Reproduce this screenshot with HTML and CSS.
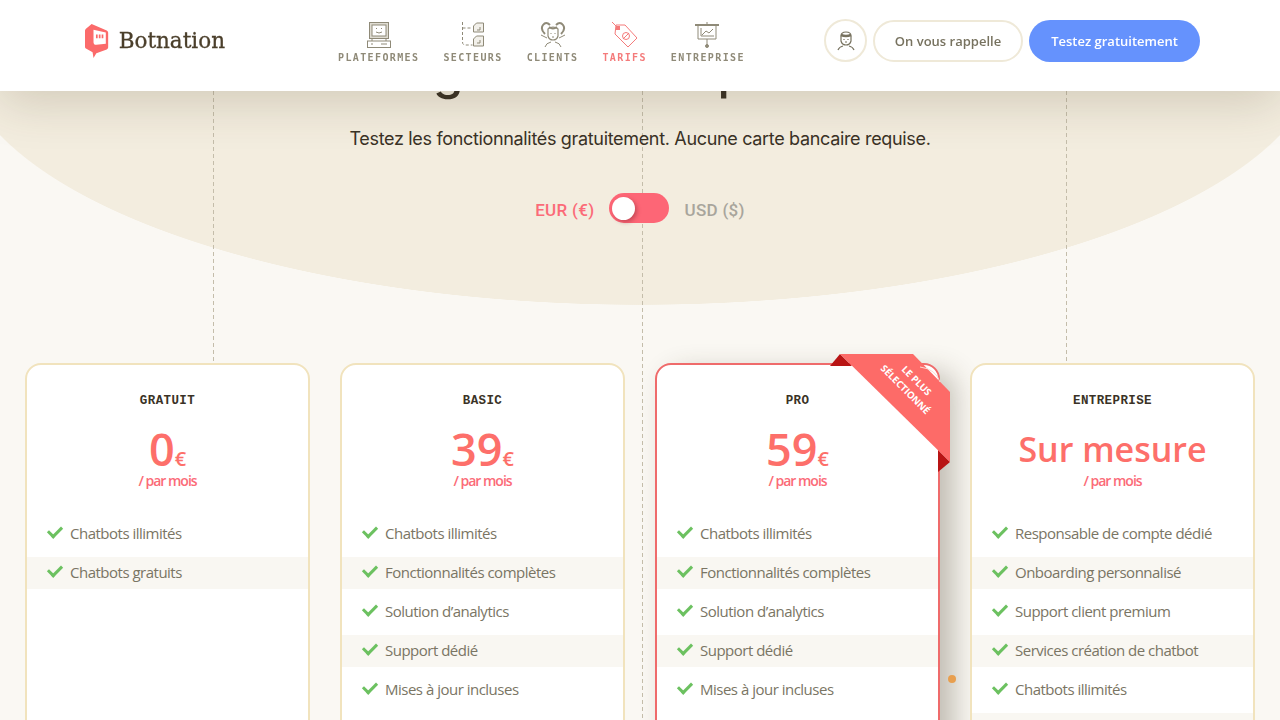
FILE: index.html
```html
<!DOCTYPE html>
<html lang="fr">
<head>
    <meta charset="UTF-8">
    <title>Botnation - Tarifs</title>
    <link rel="stylesheet" href="styles.css">
</head>
<body>
    <header class="top_bar">
        <a class="logo">
            <svg width="25" height="36" viewBox="0 0 25 36">
                <path d="M7 0 L23 7 Q24.500 8 24.500 9 V25 Q24.500 26 23 27 L12 31 L9 36 L8 30 L1 26 Q0 25.500 0 24 V7 Q0 6 1 5 Z" fill="#fb6a6a"/>
                <path d="M9 6 L22 9 V21 L12 22 Q9 22 9 19 Z" fill="#fff"/>
                <path d="M12.500 11 v4 M15.500 11 v4 M18.500 11 v4" stroke="#fb6a6a" stroke-width="1.800"/>
            </svg>
            <span>Botnation</span>
        </a>

        <nav class="menu">
            <a class="menu_item">
                <svg width="24" height="26" viewBox="0 0 24 26" fill="none" stroke="#8f8a78" stroke-width="1">
                    <rect x="2.500" y="0.500" width="19" height="16" fill="#dfdcd2"/>
                    <rect x="5" y="3" width="14" height="11" fill="#fff"/>
                    <path d="M9.500 6v1 M14.500 6v1 M9 10q3 2 6 0"/>
                    <rect x="0.500" y="19" width="23" height="6.500"/>
                    <path d="M5 17v2 M19 17v2 M4 22h2 M14 22h6"/>
                </svg>
                <span>PLATEFORMES</span>
            </a>
            <a class="menu_item">
                <svg width="24" height="26" viewBox="0 0 24 26" fill="none" stroke="#8f8a78" stroke-width="1">
                    <path d="M1.500 0v20q0 3 3 3h7 M1.500 6h9" stroke-dasharray="3 2"/>
                    <path d="M12.500 4l3-3h7v9h-10z" fill="#f2f0ea"/>
                    <path d="M12.500 17l3-3h7v10h-10z" fill="#f2f0ea"/>
                    <path d="M16 8h3v-3 M16 21h3v-3"/>
                </svg>
                <span>SECTEURS</span>
            </a>
            <a class="menu_item">
                <svg width="26" height="26" viewBox="0 0 26 26" fill="none" stroke="#8f8a78" stroke-width="1">
                    <path d="M5 12Q0 7 3 3T10 3 M21 12Q26 7 23 3T16 3" stroke-width="2"/>
                    <path d="M8 7q5-4 10 0v7q-1 4-5 4t-5-4z" fill="#fff" stroke-width="1.200"/>
                    <path d="M9 5q4 3 8 0" stroke-width="2"/>
                    <path d="M11 11v1 M15 11v1 M12 15h2 M1 13l6 3 M25 13l-6 3 M5 25q1-4 6-5 M21 25q-1-4-6-5"/>
                </svg>
                <span>CLIENTS</span>
            </a>
            <a class="menu_item menu_active">
                <svg width="25" height="26" viewBox="0 0 25 26" fill="none" stroke="#f47b7b" stroke-width="1">
                    <path d="M4 3h9l12 13-9 9L3 12z"/>
                    <path d="M0 0l7 7"/>
                    <rect x="4.500" y="4.500" width="3" height="3" fill="#f47b7b"/>
                    <circle cx="14" cy="14" r="3.500"/>
                    <path d="M11 17l6-6"/>
                </svg>
                <span>TARIFS</span>
            </a>
            <a class="menu_item">
                <svg width="25" height="26" viewBox="0 0 25 26" fill="none" stroke="#8f8a78" stroke-width="1">
                    <path d="M0 3h24" stroke-width="2"/>
                    <path d="M3 4v13h18V4 M12 0v3 M12 17v6"/>
                    <circle cx="12" cy="24" r="1.500" fill="#8f8a78"/>
                    <path d="M6 6v8h13 M7 13l4-4 3 2 4-4"/>
                </svg>
                <span>ENTREPRISE</span>
            </a>
        </nav>

        <div class="actions">
            <a class="round_btn">
                <svg width="18" height="20" viewBox="0 0 18 20" fill="none" stroke="#77725f" stroke-width="1.200">
                    <path d="M4 5q0-4 5-4t5 4v5q-1 4-5 4t-5-4z"/>
                    <path d="M4 4q5 2 10 0" stroke-width="2.500"/>
                    <path d="M7 8v1 M11 8v1 M8 11h2 M1 19q1-3 5-4 M17 19q-1-3-5-4"/>
                </svg>
            </a>
            <a class="btn btn_outline">On vous rappelle</a>
            <a class="btn btn_blue">Testez gratuitement</a>
        </div>
    </header>

    <main class="page">
        <section class="hero">
            <h1>Un large choix de plans tarifés</h1>
            <p class="hero_sub">Testez les fonctionnalités gratuitement. Aucune carte bancaire requise.</p>
            <div class="currency">
                <span class="cur_on">EUR (€)</span>
                <span class="switch"><span class="knob"></span></span>
                <span class="cur_off">USD ($)</span>
            </div>
        </section>

        <section class="plans">
            <div class="plan">
                <h2>GRATUIT</h2>
                <div class="price">0<small>€</small></div>
                <div class="period">/ par mois</div>
                <ul>
                    <li>Chatbots illimités</li>
                    <li>Chatbots gratuits</li>
                </ul>
            </div>

            <div class="plan">
                <h2>BASIC</h2>
                <div class="price">39<small>€</small></div>
                <div class="period">/ par mois</div>
                <ul>
                    <li>Chatbots illimités</li>
                    <li>Fonctionnalités complètes</li>
                    <li>Solution d’analytics</li>
                    <li>Support dédié</li>
                    <li>Mises à jour incluses</li>
                </ul>
            </div>

            <div class="plan plan_pro">
                <svg class="ribbon" width="122" height="120" viewBox="0 0 122 120">
                    <path d="M2 14 L12 2 L24 14 Z" fill="#b81414"/>
                    <path d="M110 98 L122 110 L110 120 Z" fill="#b81414"/>
                    <path d="M12 2 H85 L122 40 V110 Z" fill="#fd6b68"/>
                    <path d="M92 15 Q108 17 112 30" fill="none" stroke="#fbd9d4" stroke-width="1"/>
                    <text class="ribbon_text" transform="translate(73 18) rotate(45)">LE PLUS</text>
                    <text class="ribbon_text" transform="translate(52 17) rotate(45)">SÉLECTIONNÉ</text>
                </svg>
                <h2>PRO</h2>
                <div class="price">59<small>€</small></div>
                <div class="period">/ par mois</div>
                <ul>
                    <li>Chatbots illimités</li>
                    <li>Fonctionnalités complètes</li>
                    <li>Solution d’analytics</li>
                    <li>Support dédié</li>
                    <li>Mises à jour incluses</li>
                </ul>
                <span class="dot"></span>
            </div>

            <div class="plan">
                <h2>ENTREPRISE</h2>
                <div class="price price_text">Sur mesure</div>
                <div class="period">/ par mois</div>
                <ul>
                    <li>Responsable de compte dédié</li>
                    <li>Onboarding personnalisé</li>
                    <li>Support client premium</li>
                    <li>Services création de chatbot</li>
                    <li>Chatbots illimités</li>
                    <li>&nbsp;</li>
                </ul>
            </div>
        </section>
    </main>
</body>
</html>
```

FILE: styles.css
```css
/*tag*/
html, body{
    margin: 0;
    height: 720px;
    overflow: hidden;
}
body{
    font-family: "Open Sans", sans-serif;
    background: #faf8f3;
}
h1, h2, p, ul{
    margin: 0;
    padding: 0;
}
ul{
    list-style: none;
}

/*header*/
.top_bar{
    position: fixed;
    top: 0;
    left: 0;
    right: 0;
    z-index: 5;
    height: 91px;
    box-sizing: border-box;
    padding: 0 80px 10px 85px;
    display: flex;
    align-items: center;
    background: #fff;
    box-shadow: 0 10px 50px rgba(70, 55, 25, 0.2);
}
.logo{
    display: flex;
    align-items: center;
    gap: 10px;
    width: 140px;
}
.logo span{
    font-family: "DejaVu Serif", serif;
    font-size: 21.500px;
    color: #4b3f2b;
    -webkit-text-stroke: 0.3px #4b3f2b;
}
.menu{
    display: flex;
    gap: 24px;
    margin-left: 113px;
}
.menu_item{
    display: flex;
    flex-direction: column;
    align-items: center;
    gap: 3px;
    font-family: "DejaVu Sans Mono", monospace;
    font-size: 10px;
    font-weight: 700;
    line-height: 14px;
    letter-spacing: 1.38px;
    color: #8f8a78;
    margin-top: 5px;
}
.menu_active{
    color: #f47b7b;
}
.actions{
    margin-left: auto;
    display: flex;
    align-items: center;
    gap: 6px;
}
.round_btn{
    width: 43px;
    height: 43px;
    box-sizing: border-box;
    border: 2px solid #efe9d8;
    border-radius: 50%;
    display: flex;
    align-items: center;
    justify-content: center;
}
.btn{
    height: 42px;
    box-sizing: border-box;
    border-radius: 21px;
    display: flex;
    align-items: center;
    justify-content: center;
    font-size: 13px;
    font-weight: 600;
}
.btn_outline{
    width: 150px;
    border: 2px solid #efe9d8;
    color: #77725f;
}
.btn_blue{
    width: 171px;
    background: #6592fd;
    color: #fff;
}

/*page background, dashes and ellipse*/
.page{
    height: 720px;
    background:
        repeating-linear-gradient(to bottom, #c4bdaa 0 4px, transparent 4px 7px) 213px 0 / 1px 362px no-repeat,
        repeating-linear-gradient(to bottom, #c4bdaa 0 4px, transparent 4px 7px) 642px 0 / 1px 720px no-repeat,
        repeating-linear-gradient(to bottom, #c4bdaa 0 4px, transparent 4px 7px) 1066px 0 / 1px 362px no-repeat,
        radial-gradient(ellipse 683px 260px at 640px 45px, #f3eddf 99.8%, transparent 100%) no-repeat;
}
.hero{
    height: 363px;
    box-sizing: border-box;
    padding-top: 44px;
    text-align: center;
}
.hero h1{
    padding-left: 22px;
    font-family: "Inter", sans-serif;
    font-size: 49px;
    line-height: 56px;
    font-weight: 500;
    color: #3a3226;
    white-space: nowrap;
}
.hero_sub{
    margin-top: 27px;
    font-family: "Inter", sans-serif;
    font-size: 18px;
    line-height: 24px;
    letter-spacing: -0.33px;
    color: #3a3226;
}
.currency{
    margin-top: 42px;
    display: flex;
    justify-content: center;
    align-items: center;
    gap: 15px;
    font-family: "Roboto", sans-serif;
    font-size: 17px;
    font-weight: 500;
    letter-spacing: 0.3px;
}
.cur_on{
    color: #fb6b78;
    padding-top: 4px;
}
.cur_off{
    color: #a8a59c;
    padding-top: 4px;
}
.switch{
    width: 60px;
    height: 30px;
    border-radius: 15px;
    background: #fd6676;
    display: flex;
    align-items: center;
    padding-left: 3px;
    box-sizing: border-box;
}
.knob{
    width: 23px;
    height: 23px;
    border-radius: 50%;
    background: #fff;
    box-shadow: 2px 2px 4px rgba(120, 30, 40, 0.4);
}

/*cards*/
.plans{
    display: flex;
    gap: 30px;
    padding: 0 25px;
}
.plan{
    position: relative;
    width: 285px;
    height: 500px;
    flex: none;
    box-sizing: border-box;
    border: 2px solid #f1e3bd;
    border-radius: 16px;
    background: #fff;
    text-align: center;
}
.plan_pro{
    border-color: #ef6b6b;
    box-shadow: 14px 10px 28px rgba(60, 50, 30, 0.3);
}
.plan h2{
    margin-top: 28px;
    font-family: "Liberation Mono", monospace;
    font-size: 12.500px;
    line-height: 16px;
    font-weight: 700;
    letter-spacing: 0.4px;
    color: #3a3226;
}
.price{
    margin-top: 14px;
    height: 52px;
    font-size: 45px;
    line-height: 52px;
    font-weight: 600;
    color: #fd6f6a;
}
.price small{
    font-size: 20px;
}
.price_text{
    font-size: 34px;
}
.period{
    margin-top: -4px;
    font-size: 14px;
    line-height: 20px;
    font-weight: 600;
    letter-spacing: -1px;
    color: #fb6b78;
}
.plan ul{
    margin-top: 27px;
    display: flex;
    flex-direction: column;
    gap: 7px;
    text-align: left;
}
.plan li{
    position: relative;
    height: 32px;
    padding-left: 43px;
    font-size: 15px;
    line-height: 30px;
    letter-spacing: -0.5px;
    color: #7a7564;
}
.plan li:nth-child(even){
    background: #f9f7f2;
}
.plan li::before{
    content: "";
    position: absolute;
    left: 21px;
    top: 8px;
    width: 11px;
    height: 6px;
    border-left: 3px solid #6cc160;
    border-bottom: 3px solid #6cc160;
    transform: rotate(-45deg);
}
.plan li:last-child:nth-child(6)::before{
    display: none;
}

/*ribbon and dot*/
.ribbon{
    position: absolute;
    top: -13px;
    right: -12px;
}
.ribbon_text{
    font-family: "Open Sans", sans-serif;
    font-size: 9.600px;
    font-weight: 700;
    fill: #fff;
}
.dot{
    position: absolute;
    left: 291px;
    top: 310px;
    width: 8px;
    height: 8px;
    border-radius: 50%;
    background: #e89f4f;
}
```
